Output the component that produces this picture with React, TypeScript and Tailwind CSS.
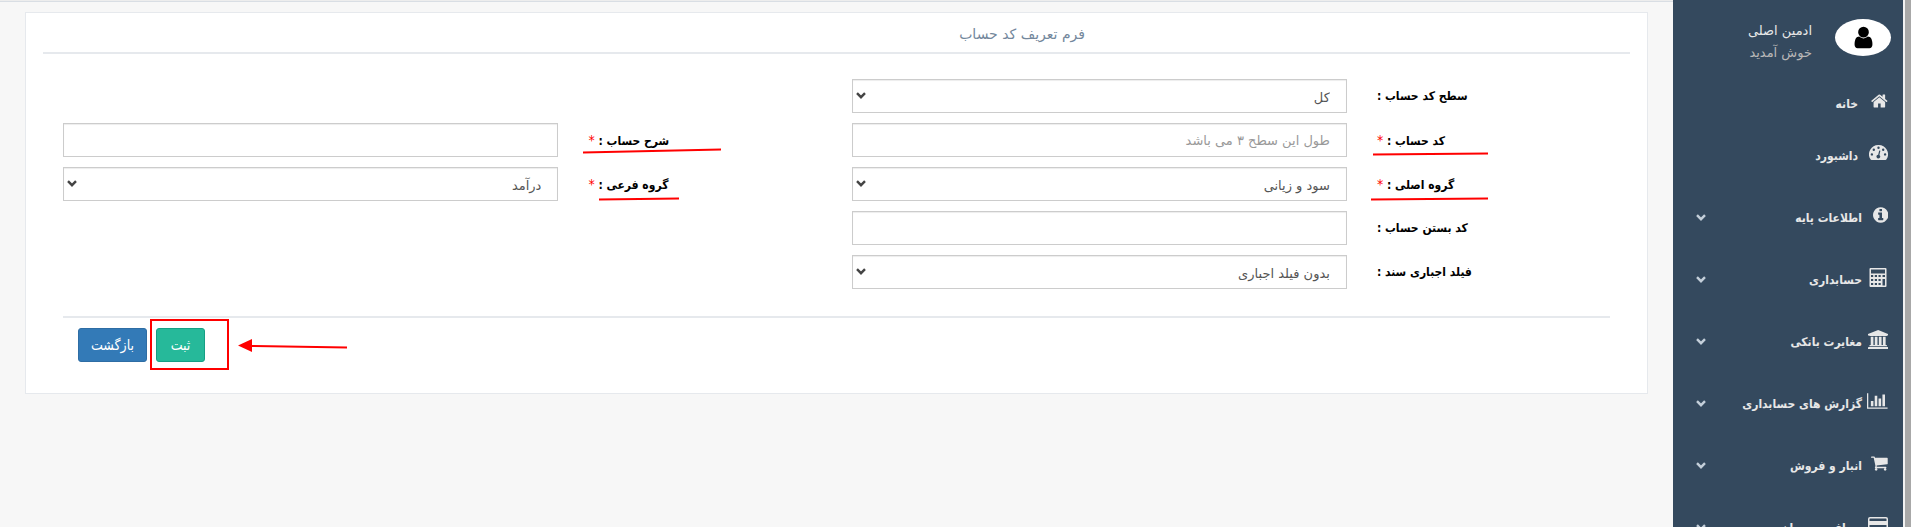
import type { ReactNode } from "react";

type IconProps = { box: string; className?: string; children: ReactNode };

function Icon({ box, className = "h-[18px] w-auto", children }: IconProps) {
  return (
    <svg viewBox={box} className={className} fill="currentColor" aria-hidden="true">
      {children}
    </svg>
  );
}

const icons = {
  home: (
    <Icon box="64 0 1664 1792">
      <path d="M1472 992v480q0 26-19 45t-45 19h-384v-384h-256v384h-384q-26 0-45-19t-19-45v-480q0-1 .5-3t.5-3l575-474 575 474q1 2 1 6zm223-69l-62 74q-8 9-21 11h-3q-13 0-21-7l-692-577-692 577q-12 8-24 7-13-2-21-11l-62-74q-8-10-7-23.5t11-21.5l719-599q32-26 76-26t76 26l244 204v-195q0-14 9-23t23-9h192q14 0 23 9t9 23v408l219 182q10 8 11 21.5t-7 23.5z" />
    </Icon>
  ),
  gauge: (
    <Icon box="0 0 19 18">
      <path
        fillRule="evenodd"
        d="M9.500 1a9.300 9.300 0 0 1 8 14.300q-.3.700-1 .700h-14q-.7 0-1-.7A9.300 9.300 0 0 1 9.500 1zM9.500 2.500a1.200 1.200 0 1 0 0 2.400 1.200 1.200 0 0 0 0-2.400zM4.800 4.500a1.200 1.200 0 1 0 0 2.400 1.200 1.200 0 0 0 0-2.400zM14.200 4.500a1.200 1.200 0 1 0 0 2.400 1.200 1.200 0 0 0 0-2.400zM2.900 9.200a1.200 1.200 0 1 0 0 2.400 1.200 1.200 0 0 0 0-2.400zM16.100 9.200a1.200 1.200 0 1 0 0 2.400 1.200 1.200 0 0 0 0-2.400zM10.200 6.400l-1 4.300a1.900 1.900 0 1 0 1.200.3l1-4.300z"
      />
    </Icon>
  ),
  info: (
    <Icon box="128 0 1536 1792">
      <path d="M1152 1376v-160q0-14-9-23t-23-9h-96v-512q0-14-9-23t-23-9h-320q-14 0-23 9t-9 23v160q0 14 9 23t23 9h96v320h-96q-14 0-23 9t-9 23v160q0 14 9 23t23 9h448q14 0 23-9t9-23zm-128-896v-160q0-14-9-23t-23-9h-192q-14 0-23 9t-9 23v160q0 14 9 23t23 9h192q14 0 23-9t9-23zm640 416q0 209-103 385.500t-279.500 279.500-385.500 103-385.500-103-279.500-279.500-103-385.500 103-385.500 279.500-279.500 385.500-103 385.500 103 279.500 279.500 103 385.500z" />
    </Icon>
  ),
  calculator: (
    <Icon box="0 0 19 19" className="h-[19px] w-auto">
      <path
        fillRule="evenodd"
        d="M1.500 0h15q1 0 1 1v17q0 1-1 1h-15q-1 0-1-1V1q0-1 1-1zM2 1.500v4h14v-4zM2 7v2h2.200v-2zM5.800 7v2h2.200v-2zM9.500 7v2h2.200v-2zM13.500 7v2h2.500v-2zM2 11v2h2.200v-2zM5.800 11v2h2.200v-2zM9.500 11v2h2.200v-2zM13.500 11v6.500h2.500v-6.500zM2 15v2h2.200v-2zM5.800 15v2h2.200v-2zM9.500 15v2h2.200v-2z"
      />
    </Icon>
  ),
  bank: (
    <Icon box="0 0 1920 1792" className="h-[19px] w-auto">
      <path d="M960 0l960 384v128h-128q0 26-20.500 45t-48.500 19h-1526q-28 0-48.500-19t-20.500-45h-128v-128zm-704 640h256v768h128v-768h256v768h128v-768h256v768h128v-768h256v768h59q28 0 48.500 19t20.500 45v64h-1664v-64q0-26 20.500-45t48.500-19h59v-768zm1595 960q28 0 48.500 19t20.500 45v128h-1920v-128q0-26 20.500-45t48.500-19h1782z" />
    </Icon>
  ),
  chart: (
    <Icon box="0 0 2048 1792">
      <path d="M640 896v512h-256v-512h256zm384-512v1024h-256v-1024h256zm1024 1152v128h-2048v-1536h128v1408h1920zm-640-896v768h-256v-768h256zm384-384v1152h-256v-1152h256z" />
    </Icon>
  ),
  cart: (
    <Icon box="64 0 1664 1792">
      <path d="M704 1536q0 52-38 90t-90 38-90-38-38-90 38-90 90-38 90 38 38 90zm896 0q0 52-38 90t-90 38-90-38-38-90 38-90 90-38 90 38 38 90zm128-1088v512q0 24-16.500 42.500t-40.500 21.500l-1044 122q13 60 13 70 0 16-24 64h920q26 0 45 19t19 45-19 45-45 19h-1024q-26 0-45-19t-19-45q0-11 8-31.500t16-36 21.500-40 15.500-29.500l-177-823h-204q-26 0-45-19t-19-45 19-45 45-19h256q16 0 28.500 6.500t19.500 15.500 13 24.500 8 26 5.500 29.500 4.500 26h1201q26 0 45 19t19 45z" />
    </Icon>
  ),
  card: (
    <Icon box="0 0 20 18">
      <path
        fillRule="evenodd"
        d="M2 1h16q2 0 2 2v12q0 2-2 2H2q-2 0-2-2V3q0-2 2-2zM1.500 3v2h17V3q0-.5-.5-.5H2q-.5 0-.5.500zM1.500 9v6q0 .5.500.500h16q.5 0 .5-.5V9zM3 13h2v1H3zM6 13h3v1H6z"
      />
    </Icon>
  ),
};

const LINKS = [
  { label: "خانه", icon: icons.home },
  { label: "داشبورد", icon: icons.gauge },
];

const GROUPS = [
  { label: "اطلاعات پایه", icon: icons.info },
  { label: "حسابداری", icon: icons.calculator },
  { label: "مغایرت بانکی", icon: icons.bank },
  { label: "گزارش های حسابداری", icon: icons.chart },
  { label: "انبار و فروش", icon: icons.cart },
  { label: "دریافت و پرداخت", icon: icons.card },
];

function Chevron({ className }: { className: string }) {
  return (
    <svg viewBox="0 0 10 7" className={className} fill="none" stroke="currentColor" strokeWidth="2.4" aria-hidden="true">
      <path d="M1 1.200l4 4 4-4" />
    </svg>
  );
}

function Sidebar() {
  return (
    <aside className="w-[230px] shrink-0 bg-[#34495e] text-[#e7e7e7]">
      <div className="flex items-start pt-[19px] pr-3">
        <div className="flex h-[37px] w-14 items-center justify-center rounded-[50%] bg-white text-black">
          <Icon box="0 0 1792 1792" className="h-[25px] w-[25px]">
            <path d="M1536 1399q0 109-62.500 187t-150.500 78h-854q-88 0-150.500-78t-62.500-187q0-85 8.500-160.500t31.500-152 58.500-131 94-89 134.500-34.500q131 128 313 128t313-128q76 0 134.500 34.500t94 89 58.500 131 31.500 152 8.500 160.500zm-256-887q0 159-112.500 271.500t-271.500 112.500-271.500-112.500-112.500-271.500 112.500-271.500 271.500-112.500 271.500 112.500 112.500 271.500z" />
          </Icon>
        </div>
        <div className="pt-px pr-[23px] text-[13px] leading-[22px]">
          <p>ادمین اصلی</p>
          <p className="text-[#bab8b8]">خوش آمدید</p>
        </div>
      </div>
      <nav className="pt-[11px] font-['DejaVu_Sans_Condensed','DejaVu_Sans',sans-serif] text-[12px] font-bold">
        {LINKS.map((item) => (
          <a key={item.label} href="#" className="flex h-[52px] items-center gap-1 pr-[15px]">
            <span className="flex w-[26px] shrink-0">{item.icon}</span>
            <span className="pt-[5px]">{item.label}</span>
          </a>
        ))}
        <div className="pt-[5px]">
          {GROUPS.map((item) => (
            <a key={item.label} href="#" className="flex h-[62px] items-center pr-[15px] pl-[23px]">
              <span className="flex w-[26px] shrink-0">{item.icon}</span>
              <span className="grow pt-[5px]">{item.label}</span>
              <Chevron className="mt-[5px] h-[7px] w-[10px] text-[#c4cfda]" />
            </a>
          ))}
        </div>
      </nav>
    </aside>
  );
}

// Hand-drawn red marks laid over the form, measured from their anchor's top-left corner
function Mark({ d }: { d: string }) {
  return (
    <svg
      className="pointer-events-none absolute top-0 left-0 h-px w-px overflow-visible"
      fill="none"
      stroke="#f00"
      strokeWidth="2"
      aria-hidden="true"
    >
      <path d={d} />
    </svg>
  );
}

const CONTROL =
  "block h-[34px] w-full appearance-none border border-[#ccc] bg-white px-4 text-[13px] text-[#555] shadow-[inset_0_1px_1px_rgba(0,0,0,0.075)] outline-none placeholder:text-[#999]";

type FieldProps = {
  id: string;
  label: string;
  required?: boolean;
  option?: string;
  placeholder?: string;
  mark?: string;
};

function Field({ id, label, required, option, placeholder, mark }: FieldProps) {
  return (
    <div className="grid grid-cols-[8fr_17fr] gap-x-[30px]">
      <label
        htmlFor={id}
        className="relative h-[34px] text-left font-['DejaVu_Sans_Condensed','DejaVu_Sans',sans-serif] text-[12px] leading-[34px] font-bold text-black"
      >
        {label} : {required && <span className="text-[14px] font-normal text-[#f00]">*</span>}
        {mark && <Mark d={mark} />}
      </label>
      {option ? (
        <div className="relative">
          <select id={id} className={`${CONTROL} pt-1`}>
            <option>{option}</option>
          </select>
          <Chevron className="pointer-events-none absolute top-[13px] left-1 h-[7px] w-[10px] text-[#444]" />
        </div>
      ) : (
        <input id={id} type="text" placeholder={placeholder} className={CONTROL} />
      )}
    </div>
  );
}

function FieldRow({ children }: { children: ReactNode }) {
  return <div className="grid grid-cols-2 gap-x-[30px]">{children}</div>;
}

function AccountForm() {
  return (
    <form className="px-5 pt-[25px]">
      <div className="flex flex-col gap-[10px]">
        <FieldRow>
          <Field id="level" label="سطح کد حساب" option="کل" />
        </FieldRow>
        <FieldRow>
          <Field id="code" label="کد حساب" required placeholder="طول این سطح ۳ می باشد" mark="M-4 31.500L111 30.500" />
          <Field id="description" label="شرح حساب" required mark="M-5 29.500L133 26.500" />
        </FieldRow>
        <FieldRow>
          <Field id="main-group" label="گروه اصلی" required option="سود و زیانی" mark="M-6 32.500L111 31.500" />
          <Field id="sub-group" label="گروه فرعی" required option="درآمد" mark="M11 32.500L91 31.500" />
        </FieldRow>
        <FieldRow>
          <Field id="closing-code" label="کد بستن حساب" />
        </FieldRow>
        <FieldRow>
          <Field id="required-field" label="فیلد اجباری سند" option="بدون فیلد اجباری" />
        </FieldRow>
      </div>
      <hr className="mt-[27px] border-t-2 border-[#e6e9ed]" />
      <div className="flex justify-end gap-[9px] pt-[10px] pl-[15px] font-['DejaVu_Sans_Condensed','DejaVu_Sans',sans-serif] text-[14px] text-white">
        <div className="relative">
          <button type="button" className="h-[34px] min-w-[49px] rounded-[3px] border border-[#169f85] bg-[#26b99a] px-3">
            ثبت
          </button>
          <Mark d="M-5 -8H72V41H-5ZM95 18L191 19.500" />
          <svg className="pointer-events-none absolute top-0 left-0 h-px w-px overflow-visible" fill="#f00" aria-hidden="true">
            <path d="M82 17.500l14-6.500v13z" />
          </svg>
        </div>
        <button type="button" className="h-[34px] rounded-[3px] border border-[#2e6da4] bg-[#337ab7] px-3">
          بازگشت
        </button>
      </div>
    </form>
  );
}

export default function App() {
  return (
    <div dir="rtl" className="flex h-screen overflow-hidden bg-[#f7f7f7] font-['DejaVu_Sans',sans-serif]">
      <div className="w-2 shrink-0 border-l-2 border-[#f1f1f1] bg-[#a8a8a8]" />
      <Sidebar />
      <main className="min-w-0 grow">
        <div className="h-[2px] border-b border-[#d9dee4] bg-[#ededed]" />
        <div className="px-[25px] pt-[10px]">
          <section className="border border-[#e6e9ed] bg-white px-[17px] pb-[31px]">
            <div className="grid h-[41px] grid-cols-3 items-center border-b-2 border-[#e6e9ed]">
              <h2 className="col-start-2 pt-1 pr-4 text-[14px] text-[#73879c]">فرم تعریف کد حساب</h2>
            </div>
            <AccountForm />
          </section>
        </div>
      </main>
    </div>
  );
}
